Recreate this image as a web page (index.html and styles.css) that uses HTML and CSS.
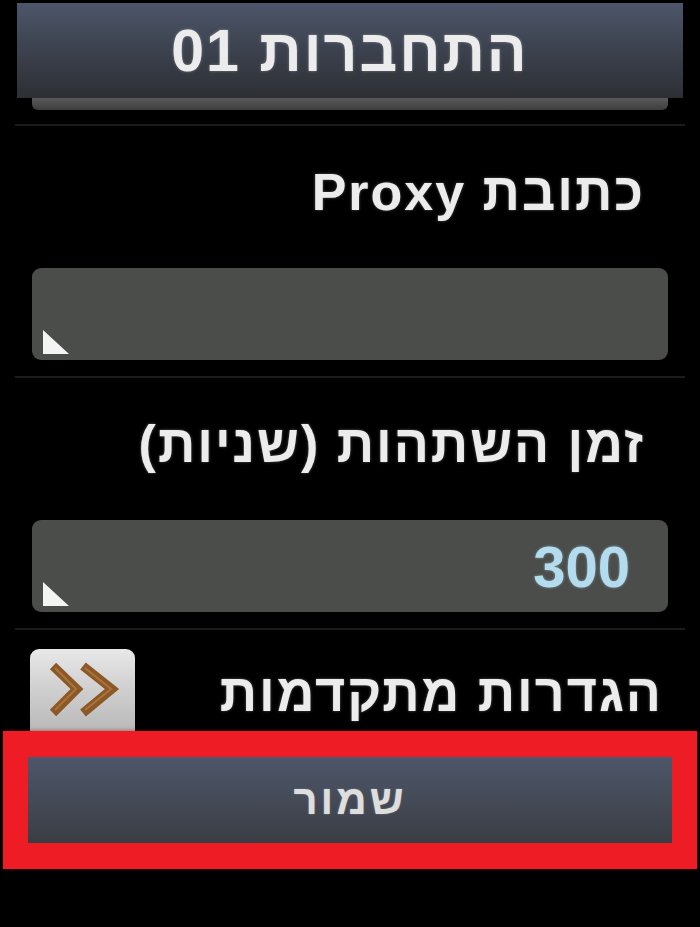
FILE: index.html
```html
<!DOCTYPE html>
<html lang="he" dir="rtl">
<head>
<meta charset="utf-8">
<title>התחברות 01</title>
<link rel="stylesheet" href="styles.css">
</head>
<body>
<div class="screen">
  <div class="header">
    <div class="header-bar">התחברות 01</div>
    <div class="header-edge"></div>
  </div>

  <div class="section">
    <div class="label">כתובת Proxy</div>
    <div class="field">
      <span class="field-value"></span>
      <span class="corner"></span>
    </div>
  </div>

  <div class="section">
    <div class="label">זמן השתהות (שניות)</div>
    <div class="field">
      <span class="field-value">300</span>
      <span class="corner"></span>
    </div>
  </div>

  <div class="section section-advanced">
    <div class="label label-advanced">הגדרות מתקדמות</div>
    <div class="chevron-btn">
      <svg width="105" height="82" viewBox="0 0 105 82">
        <polyline points="23,17 47,40 23,64" fill="none" stroke="#8b5826" stroke-width="9"/>
        <polyline points="53,17 82,40 53,64" fill="none" stroke="#8b5826" stroke-width="9"/>
        <polyline points="25,19 46,40 25,61" fill="none" stroke="#c0864a" stroke-width="2" opacity="0.6"/>
        <polyline points="55,19 81,40 55,61" fill="none" stroke="#c0864a" stroke-width="2" opacity="0.6"/>
      </svg>
    </div>
  </div>

  <div class="highlight">
    <div class="save-btn">שמור</div>
  </div>
</div>
</body>
</html>
```

FILE: styles.css
```css
html, body {
  margin: 0;
  padding: 0;
  background: #000;
}

.screen {
  width: 700px;
  height: 927px;
  background: #000;
  display: flex;
  flex-direction: column;
  font-family: "Liberation Sans", "DejaVu Sans", sans-serif;
  color: #ececec;
  overflow: hidden;
}

.header {
  margin-top: 3px;
  display: flex;
  flex-direction: column;
  border-bottom: 2px solid #1c1c1c;
  padding-bottom: 14px;
  margin-left: 15px;
  margin-right: 15px;
}

.header-bar {
  margin: 0 2px;
  height: 95px;
  display: flex;
  align-items: center;
  justify-content: center;
  background: linear-gradient(to bottom, #4d566a 0%, #3d4350 45%, #2d2f33 100%);
  font-size: 59px;
  letter-spacing: 2px;
  font-weight: bold;
  text-shadow: 0 0 3px rgba(255,255,255,0.35);
}

.header-edge {
  height: 12px;
  margin: 0 17px 0 17px;
  background: linear-gradient(to bottom, #5a5a5a, #3e3e3e);
  border-radius: 0 0 6px 6px;
}

.section {
  display: flex;
  flex-direction: column;
  margin: 0 15px;
  border-bottom: 2px solid #1c1c1c;
  padding-top: 36px;
  padding-bottom: 16px;
}

.label {
  height: 60px;
  line-height: 60px;
  padding-right: 40px;
  font-size: 52px;
  letter-spacing: 2px;
  font-weight: bold;
  text-shadow: 0 0 3px rgba(255,255,255,0.35);
}

.field {
  position: relative;
  margin: 46px 17px 0 17px;
  height: 92px;
  border-radius: 9px;
  background: #4a4d49;
  display: flex;
  align-items: center;
  padding-right: 38px;
}

.field-value {
  font-size: 58px;
  font-weight: bold;
  color: #b3dcef;
  text-shadow: 0 0 3px rgba(200,235,255,0.5);
}

.corner {
  position: absolute;
  left: 11px;
  bottom: 6px;
  width: 26px;
  height: 24px;
  background: #f4f4f4;
  clip-path: polygon(0 0, 0 100%, 100% 100%);
  filter: blur(0.6px);
}

.section-advanced {
  flex-direction: row;
  align-items: flex-start;
  justify-content: space-between;
  padding-top: 19px;
  padding-bottom: 0;
  border-bottom: none;
}

.label-advanced {
  margin-top: 14px;
  padding-right: 22px;
}

.chevron-btn {
  width: 105px;
  height: 82px;
  margin-left: 15px;
  border-radius: 9px 9px 0 0;
  background: linear-gradient(to bottom, #e8e8e8 0%, #cfcfcf 50%, #b9b9b9 100%);
}

.chevron-btn svg {
  display: block;
}

.highlight {
  margin: 0 3px;
  border: 26px solid #ee1c25;
  border-left-width: 25px;
  border-right-width: 25px;
  box-shadow: 0 0 4px rgba(120,0,0,0.6);
}

.save-btn {
  height: 86px;
  display: flex;
  align-items: center;
  justify-content: center;
  background: linear-gradient(to bottom, #4d566a 0%, #444a56 50%, #3a3d44 100%);
  font-size: 42px;
  letter-spacing: 3px;
  font-weight: bold;
  color: #dedede;
  text-shadow: 0 0 2px rgba(255,255,255,0.3);
}
```
